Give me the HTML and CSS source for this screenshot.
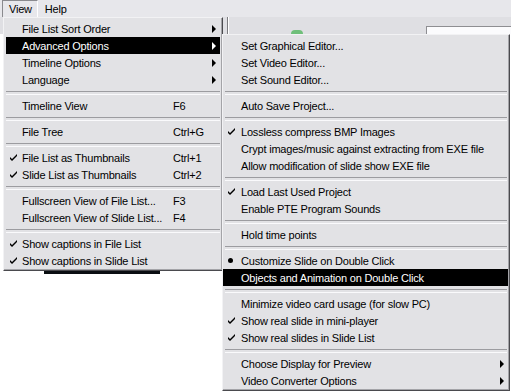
FILE: index.html
```html
<!DOCTYPE html>
<html>
<head>
<meta name="viewport" content="width=device-width, initial-scale=1">
<link rel="stylesheet" href="styles.css">
</head>
<body>

<div class="app">
  <div class="menubar">
    <span class="mb-item pressed">View</span>
    <span class="mb-item">Help</span>
  </div>
  <div class="toolbar">
    <span class="tb-line"></span>
    <span class="tb-knob"></span>
    <span class="tb-field"></span>
  </div>
  <div class="workspace">
    <div class="strip"></div>
  </div>
</div>

<!-- View menu -->
<div class="menu main-menu">
  <div class="item"><span class="label">File List Sort Order</span><span class="arrow"></span></div>
  <div class="item active"><span class="label">Advanced Options</span><span class="arrow"></span></div>
  <div class="item"><span class="label">Timeline Options</span><span class="arrow"></span></div>
  <div class="item"><span class="label">Language</span><span class="arrow"></span></div>
  <div class="sep"></div>
  <div class="item"><span class="label">Timeline View</span><span class="key">F6</span></div>
  <div class="sep"></div>
  <div class="item"><span class="label">File Tree</span><span class="key">Ctrl+G</span></div>
  <div class="sep"></div>
  <div class="item checked"><span class="label">File List as Thumbnails</span><span class="key">Ctrl+1</span></div>
  <div class="item checked"><span class="label">Slide List as Thumbnails</span><span class="key">Ctrl+2</span></div>
  <div class="sep"></div>
  <div class="item"><span class="label">Fullscreen View of File List...</span><span class="key">F3</span></div>
  <div class="item"><span class="label">Fullscreen View of Slide List...</span><span class="key">F4</span></div>
  <div class="sep"></div>
  <div class="item checked"><span class="label">Show captions in File List</span></div>
  <div class="item checked"><span class="label">Show captions in Slide List</span></div>
</div>

<!-- Advanced Options submenu -->
<div class="menu sub-menu">
  <div class="item"><span class="label">Set Graphical Editor...</span></div>
  <div class="item"><span class="label">Set Video Editor...</span></div>
  <div class="item"><span class="label">Set Sound Editor...</span></div>
  <div class="sep"></div>
  <div class="item"><span class="label">Auto Save Project...</span></div>
  <div class="sep"></div>
  <div class="item checked"><span class="label">Lossless compress BMP Images</span></div>
  <div class="item"><span class="label">Crypt images/music against extracting from EXE file</span></div>
  <div class="item"><span class="label">Allow modification of slide show EXE file</span></div>
  <div class="sep"></div>
  <div class="item checked"><span class="label">Load Last Used Project</span></div>
  <div class="item"><span class="label">Enable PTE Program Sounds</span></div>
  <div class="sep"></div>
  <div class="item"><span class="label">Hold time points</span></div>
  <div class="sep"></div>
  <div class="item radio"><span class="label">Customize Slide on Double Click</span></div>
  <div class="item active"><span class="label">Objects and Animation on Double Click</span></div>
  <div class="sep"></div>
  <div class="item"><span class="label">Minimize video card usage (for slow PC)</span></div>
  <div class="item checked"><span class="label">Show real slide in mini-player</span></div>
  <div class="item checked"><span class="label">Show real slides in Slide List</span></div>
  <div class="sep"></div>
  <div class="item"><span class="label">Choose Display for Preview</span><span class="arrow"></span></div>
  <div class="item"><span class="label">Video Converter Options</span><span class="arrow"></span></div>
</div>

</body>
</html>
```
FILE: styles.css
```css
* {
  box-sizing: border-box;
}

body {
  margin: 0;
  width: 511px;
  height: 391px;
  overflow: hidden;
  font-family: "Liberation Sans", Arial, sans-serif;
  font-size: 11px;
  letter-spacing: -0.2px;
  color: #000;
  background: #fff;
}

/* window behind the menus */
.app {
  display: flex;
  flex-direction: column;
  height: 391px;
}

.menubar {
  height: 17px;
  display: flex;
  align-items: stretch;
  padding-left: 2px;
  background: #e7e7eb;
}

.mb-item {
  display: flex;
  align-items: center;
  padding: 0 6px;
  margin-right: 1px;
}

.mb-item.pressed {
  padding: 0 5px 0 6px;
  border-left: 1px solid #8a8a8e;
  border-top: 1px solid #8a8a8e;
  border-right: 1px solid #fff;
}

.toolbar {
  height: 17px;
  display: flex;
  align-items: flex-end;
  background: #dfdfe3;
  padding-left: 227px;
}

.tb-line {
  width: 2px;
  height: 17px;
  background: #7c7c80;
  border-right: 1px solid #fff;
}

.tb-knob {
  width: 12px;
  height: 4px;
  margin-left: 62px;
  border-radius: 6px 6px 0 0;
  background: #6fbf7a;
}

.tb-field {
  margin-left: auto;
  width: 85px;
  height: 8px;
  background: #fbfbfd;
  border-top: 1px solid #8e8e92;
  border-left: 1px solid #8e8e92;
}

.workspace {
  flex: 1;
  display: flex;
  background: #fff;
  padding: 237px 0 0 44px;
}

.strip {
  width: 116px;
  height: 3px;
  background: #0a0e12;
}

/* popup menus */
.menu {
  position: absolute;
  display: flex;
  flex-direction: column;
  padding: 2px 0 1px;
  background: #e2e2e5;
  border: 1px solid;
  border-color: #f2f2f4 #4a4a4e #4a4a4e #f2f2f4;
  box-shadow: inset -1px -1px 0 #a4a4a8;
}

.main-menu {
  left: 3px;
  top: 17px;
  width: 220px;
  height: 254px;
}

.sub-menu {
  left: 222px;
  top: 34px;
  width: 288px;
  height: 357px;
}

.item {
  position: relative;
  display: flex;
  align-items: center;
  height: 17px;
  flex: none;
  margin: 0 2px;
  padding: 0 4px 0 16px;
  white-space: nowrap;
}

.sub-menu .item {
  margin: 0 1px 0 0;
  padding-left: 18px;
}

.main-menu .label {
  width: 151px;
}

.sub-menu .label {
  flex: 1;
}

.item.active {
  background: #000;
  color: #fff;
}

.arrow {
  margin-left: auto;
  width: 0;
  height: 0;
  border-top: 4px solid transparent;
  border-bottom: 4px solid transparent;
  border-left: 4px solid #000;
}

.item.active .arrow {
  border-left-color: #fff;
}

.item.checked::before {
  content: "";
  position: absolute;
  left: 4px;
  top: 5px;
  width: 7px;
  height: 7px;
  background: url("data:image/svg+xml,%3Csvg xmlns='http://www.w3.org/2000/svg' width='7' height='7'%3E%3Cpath d='M0 3L2 5L7 0L7 2L2 7L0 5Z' fill='%23000'/%3E%3C/svg%3E") no-repeat;
}

.sub-menu .item.checked::before {
  left: 5px;
}

.item.radio::before {
  content: "";
  position: absolute;
  left: 5px;
  top: 6px;
  width: 5px;
  height: 5px;
  border-radius: 50%;
  background: #000;
}

.sep {
  flex: none;
  height: 9px;
  margin: 0 2px;
  padding-top: 3px;
}

.sep::after {
  content: "";
  display: block;
  height: 2px;
  border-top: 1px solid #9c9ca0;
  border-bottom: 1px solid #fafafc;
}
```
